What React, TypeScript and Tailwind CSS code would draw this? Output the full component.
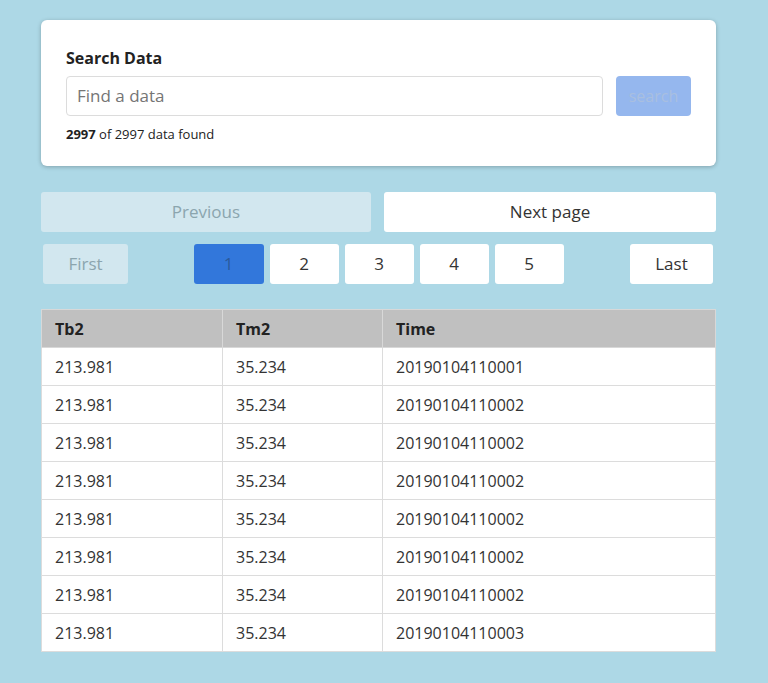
import React from "react";

const rows = [
  "20190104110001",
  "20190104110002",
  "20190104110002",
  "20190104110002",
  "20190104110002",
  "20190104110002",
  "20190104110002",
  "20190104110003",
];

export default function App() {
  return (
    <div
      className="min-h-[683px] w-full bg-[#add8e6] pt-[20px] text-[#333]"
      style={{ fontFamily: '"Open Sans", "Noto Sans", sans-serif' }}
    >
      <div className="ml-[41px] w-[675px]">
        <div className="rounded-[6px] bg-white pt-[24px] pb-[22px] pl-[25px] pr-[25px] shadow-[0_1px_4px_rgba(0,0,0,0.25)]">
          <div className="text-[16px] font-bold leading-[28px] text-[#222]">Search Data</div>
          <div className="mt-[4px] flex gap-[13px]">
            <div className="flex h-[40px] flex-1 items-center rounded-[4px] border border-[#dcdcdc] px-[10px] text-[17px] text-[#757575]">
              Find a data
            </div>
            <div className="flex h-[40px] w-[75px] items-center justify-center rounded-[4px] bg-[#95b7ee] text-[16px] text-[#a9bfe0]">
              search
            </div>
          </div>
          <div className="mt-[8px] text-[13px] leading-[20px] text-[#222]">
            <span className="font-bold">2997</span> of 2997 data found
          </div>
        </div>

        <div className="mt-[26px] flex gap-[13px]">
          <div className="flex h-[40px] w-[330px] items-center justify-center rounded-[3px] bg-[#d2e7ef] text-[17px] text-[#8ba5ae]">
            Previous
          </div>
          <div className="flex h-[40px] flex-1 items-center justify-center rounded-[3px] bg-white text-[17px] text-[#333]">
            Next page
          </div>
        </div>

        <div className="mt-[12px] flex items-center justify-between pl-[2px] pr-[3px]">
          <div className="flex h-[40px] w-[85px] items-center justify-center rounded-[3px] bg-[#d2e7ef] text-[17px] text-[#8ba5ae]">
            First
          </div>
          <div className="mr-[1px] flex gap-[6px]">
            <div className="flex h-[40px] w-[70px] items-center justify-center rounded-[3px] bg-[#3277db] text-[17px] text-[#2a5a9c]">
              1
            </div>
            {["2", "3", "4", "5"].map((n) => (
              <div
                key={n}
                className="flex h-[40px] w-[69px] items-center justify-center rounded-[3px] bg-white text-[17px] text-[#333]"
              >
                {n}
              </div>
            ))}
          </div>
          <div className="flex h-[40px] w-[83px] items-center justify-center rounded-[3px] bg-white text-[17px] text-[#333]">
            Last
          </div>
        </div>

        <table className="mt-[25px] w-[675px] table-fixed border-collapse text-[16px]">
          <colgroup>
            <col className="w-[181px]" />
            <col className="w-[160px]" />
            <col />
          </colgroup>
          <thead>
            <tr className="h-[38px] bg-[#c0c0c0]">
              <th className="border border-[#d8d8d8] px-[13px] text-left font-bold text-[#222]">Tb2</th>
              <th className="border border-[#d8d8d8] px-[13px] text-left font-bold text-[#222]">Tm2</th>
              <th className="border border-[#d8d8d8] px-[13px] text-left font-bold text-[#222]">Time</th>
            </tr>
          </thead>
          <tbody>
            {rows.map((t, i) => (
              <tr key={i} className="h-[38px] bg-white">
                <td className="border border-[#dcdcdc] px-[13px]">213.981</td>
                <td className="border border-[#dcdcdc] px-[13px]">35.234</td>
                <td className="border border-[#dcdcdc] px-[13px]">{t}</td>
              </tr>
            ))}
          </tbody>
        </table>
      </div>
    </div>
  );
}
